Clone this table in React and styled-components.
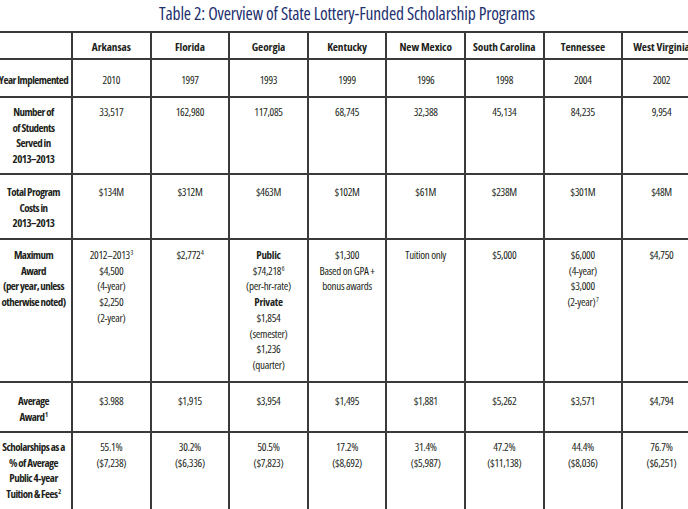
import React from "react";
import styled, { createGlobalStyle } from "styled-components";

const Global = createGlobalStyle`
  html, body { margin: 0; padding: 0; background: #fff; overflow: hidden; }
  body {
    width: 688px;
    height: 509px;
    font-family: "Open Sans", "DejaVu Sans Condensed", sans-serif;
    font-stretch: 75%;
    color: #231f20;
  }
`;

const Page = styled.div`
  width: 688px;
  height: 509px;
  overflow: hidden;
`;

const Title = styled.h1`
  margin: 0;
  height: 31px;
  padding-top: 3px;
  box-sizing: border-box;
  text-align: center;
  font-family: "Open Sans", sans-serif;
  font-stretch: 75%;
  font-weight: 400;
  font-size: 17.5px;
  line-height: 20px;
  letter-spacing: -0.15px;
  color: #22306f;
  white-space: nowrap;
  padding-left: 6px;
`;

const Table = styled.div`
  border-top: 2px solid #3a3a3a;
  width: 702px;
`;

const Row = styled.div`
  display: grid;
  grid-template-columns: 73px repeat(8, 78.6px);
  height: ${(p) => p.$h}px;
  box-sizing: border-box;
  border-bottom: 2px solid #3a3a3a;
`;

const Cell = styled.div`
  box-sizing: border-box;
  border-right: 2px solid #3a3a3a;
  padding-top: ${(p) => p.$pt}px;
  text-align: center;
  font-size: 11px;
  line-height: 15.7px;
  font-weight: 430;
  letter-spacing: -0.3px;
  white-space: nowrap;
  display: flex;
  flex-direction: column;
  align-items: center;
`;

const HeadCell = styled(Cell)`
  font-weight: 700;
  font-size: 11.3px;
  letter-spacing: -0.1px;
`;

const Label = styled(Cell)`
  font-weight: 700;
  font-size: 11px;
  letter-spacing: -0.55px;
  padding-right: 4px;
`;

const Line = styled.span`
  display: block;
  font-weight: ${(p) => (p.$bold ? 700 : "inherit")};
`;

const Sup = styled.sup`
  font-size: 6.5px;
  line-height: 0;
  vertical-align: 4px;
  margin-left: 0.5px;
`;

const states = [
  "Arkansas",
  "Florida",
  "Georgia",
  "Kentucky",
  "New Mexico",
  "South Carolina",
  "Tennessee",
  "West Virginia",
];

const t = (text, sup, bold) => ({ text, sup, bold });

const rows = [
  {
    h: 38,
    pt: 12,
    label: [t("Year Implemented")],
    cells: ["2010", "1997", "1993", "1999", "1996", "1998", "2004", "2002"].map((v) => [t(v)]),
  },
  {
    h: 77,
    pt: 6,
    label: [t("Number of"), t("of Students"), t("Served in"), t("2013–2013")],
    cells: ["33,517", "162,980", "117,085", "68,745", "32,388", "45,134", "84,235", "9,954"].map((v) => [t(v)]),
  },
  {
    h: 65,
    pt: 9,
    label: [t("Total Program"), t("Costs in"), t("2013–2013")],
    cells: ["$134M", "$312M", "$463M", "$102M", "$61M", "$238M", "$301M", "$48M"].map((v) => [t(v)]),
  },
  {
    h: 143,
    pt: 7,
    label: [t("Maximum"), t("Award"), t("(per year, unless"), t("otherwise noted)")],
    cells: [
      [t("2012–2013", "3"), t("$4,500"), t("(4-year)"), t("$2,250"), t("(2-year)")],
      [t("$2,772", "4")],
      [
        t("Public", null, true),
        t("$74,218", "6"),
        t("(per-hr-rate)"),
        t("Private", null, true),
        t("$1,854"),
        t("(semester)"),
        t("$1,236"),
        t("(quarter)"),
      ],
      [t("$1,300"), t("Based on GPA +"), t("bonus awards")],
      [t("Tuition only")],
      [t("$5,000")],
      [t("$6,000"), t("(4-year)"), t("$3,000"), t("(2-year)", "7")],
      [t("$4,750")],
    ],
  },
  {
    h: 50,
    pt: 10,
    label: [t("Average"), t("Award", "1")],
    cells: ["$3.988", "$1,915", "$3,954", "$1,495", "$1,881", "$5,262", "$3,571", "$4,794"].map((v) => [t(v)]),
  },
  {
    h: 90,
    pt: 6,
    label: [t("Scholarships as a"), t("% of Average"), t("Public 4-year"), t("Tuition & Fees", "2")],
    cells: [
      ["55.1%", "($7,238)"],
      ["30.2%", "($6,336)"],
      ["50.5%", "($7,823)"],
      ["17.2%", "($8,692)"],
      ["31.4%", "($5,987)"],
      ["47.2%", "($11,138)"],
      ["44.4%", "($8,036)"],
      ["76.7%", "($6,251)"],
    ].map((pair) => pair.map((v) => t(v))),
  },
];

const Lines = ({ lines }) =>
  lines.map((l, i) => (
    <Line key={i} $bold={l.bold}>
      {l.text}
      {l.sup && <Sup>{l.sup}</Sup>}
    </Line>
  ));

export default function App() {
  return (
    <Page>
      <Global />
      <Title>Table 2: Overview of State Lottery-Funded Scholarship Programs</Title>
      <Table>
        <Row $h={27}>
          <Label $pt={6} />
          {states.map((s) => (
            <HeadCell key={s} $pt={6}>
              {s}
            </HeadCell>
          ))}
        </Row>
        {rows.map((r, i) => (
          <Row key={i} $h={r.h}>
            <Label $pt={r.pt}>
              <Lines lines={r.label} />
            </Label>
            {r.cells.map((c, j) => (
              <Cell key={j} $pt={r.pt}>
                <Lines lines={c} />
              </Cell>
            ))}
          </Row>
        ))}
      </Table>
    </Page>
  );
}
